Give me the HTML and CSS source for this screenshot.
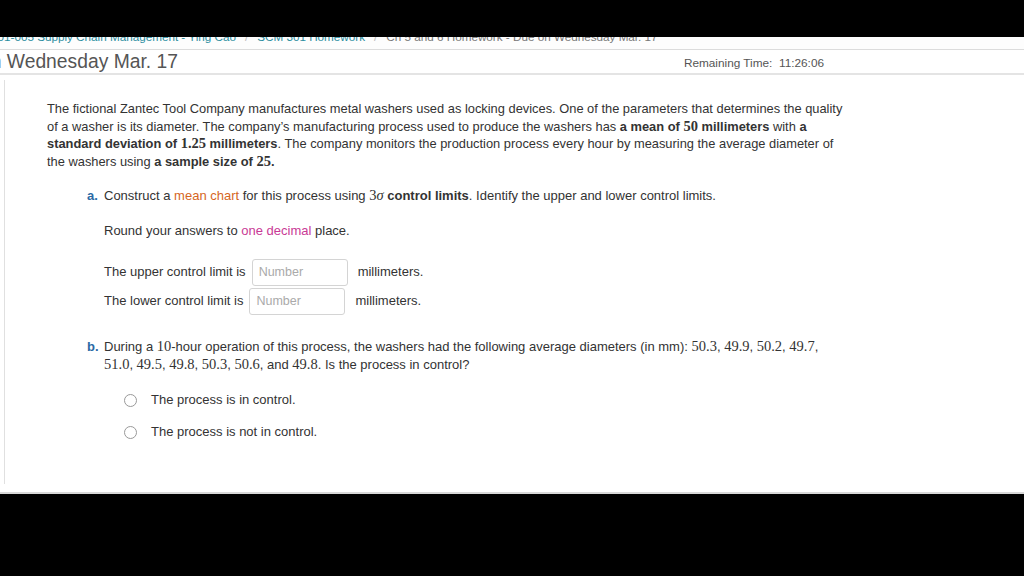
FILE: index.html
```html
<!DOCTYPE html>
<html>
<head>
<meta charset="utf-8">
<link rel="stylesheet" href="styles.css">
</head>
<body>
<div class="screen">
  <div class="viewport">
    <div class="crumbs">
      <div class="crumbs-inner">
        <span class="crumb">301-005 Supply Chain Management - Ying Cao</span>
        <span class="sep">/</span>
        <span class="crumb">SCM 301 Homework</span>
        <span class="sep">/</span>
        <span class="crumb-current">Ch 5 and 6 Homework - Due on Wednesday Mar. 17</span>
      </div>
    </div>
    <div class="header">
      <h1 class="title"><span class="title-cut">on </span>Wednesday Mar. 17</h1>
      <div class="timer">Remaining Time:&nbsp;&nbsp;<span class="timer-val">11:26:06</span></div>
    </div>
    <div class="content">
      <p class="intro">The fictional Zantec Tool Company manufactures metal washers used as locking devices. One of the parameters that determines the quality of a washer is its diameter. The company’s manufacturing process used to produce the washers has <b>a mean of <span class="m">50</span> millimeters</b> with <b>a standard deviation of <span class="m">1.25</span> millimeters</b>. The company monitors the production process every hour by measuring the average diameter of the washers using <b>a sample size of <span class="m">25</span>.</b></p>

      <div class="part part-a">
        <div class="part-row">
          <span class="marker">a.</span>
          <div class="part-body">
            <p class="line">Construct a <span class="orange">mean chart</span> for this process using <span class="m">3<i>σ</i></span> <b>control limits</b>. Identify the upper and lower control limits.</p>
            <p class="line round">Round your answers to <span class="magenta">one decimal</span> place.</p>
            <div class="answer upper">The upper control limit is <span class="box">Number</span> millimeters.</div>
            <div class="answer lower">The lower control limit is <span class="box">Number</span> millimeters.</div>
          </div>
        </div>
      </div>

      <div class="part part-b">
        <div class="part-row">
          <span class="marker">b.</span>
          <div class="part-body">
            <p class="line">During a <span class="m">10</span>-hour operation of this process, the washers had the following average diameters (in mm): <span class="m">50.3</span>, <span class="m">49.9</span>, <span class="m">50.2</span>, <span class="m">49.7</span>, <span class="m">51.0</span>, <span class="m">49.5</span>, <span class="m">49.8</span>, <span class="m">50.3</span>, <span class="m">50.6</span>, and <span class="m">49.8</span>. Is the process in control?</p>
            <div class="options">
              <div class="option"><span class="radio"></span><span>The process is in control.</span></div>
              <div class="option"><span class="radio"></span><span>The process is not in control.</span></div>
            </div>
          </div>
        </div>
      </div>
    </div>
  </div>
</div>
</body>
</html>
```

FILE: styles.css
```css
html, body {
  margin: 0;
  padding: 0;
  background: #000;
}
.screen {
  width: 1024px;
  height: 576px;
  background: #000;
  overflow: hidden;
}
.viewport {
  margin-top: 37px;
  height: 455px;
  background: #fff;
  border-bottom: 2px solid #d8d8d8;
  overflow: hidden;
  font-family: "Liberation Sans", Arial, sans-serif;
  color: #333;
}
.crumbs {
  height: 12px;
  border-bottom: 1px solid #dcdcdc;
  overflow: hidden;
  background: #fdfdfd;
}
.crumbs-inner {
  margin-top: -8px;
  margin-left: -9px;
  font-size: 11.7px;
  line-height: 16px;
  white-space: nowrap;
  display: flex;
  gap: 9px;
}
.crumb { color: #2b8ea0; }
.sep { color: #bbb; }
.crumb-current { color: #777; }
.header {
  height: 23px;
  border-bottom: 2px solid #e4e4e4;
  display: flex;
  align-items: center;
  justify-content: space-between;
  padding-right: 200px;
}
.title {
  margin: 0 0 0 -20px;
  font-weight: normal;
  font-size: 19.3px;
  line-height: 23px;
  color: #555;
  white-space: nowrap;
}
.timer {
  font-size: 11.8px;
  color: #555;
  padding-top: 2px;
}
.content {
  margin: 5px 0 0 4px;
  height: 404px;
  border-left: 1px solid #e0e0e0;
  padding: 20px 0 0 42px;
  box-sizing: border-box;
  font-size: 13px;
  line-height: 17.6px;
}
.intro {
  margin: 0;
  width: 800px;
  font-size: 12.875px;
}
.m {
  font-family: "Liberation Serif", "Times New Roman", serif;
  font-size: 14.5px;
  line-height: 1;
}
.orange { color: #d6661e; }
.magenta { color: #c93a95; }
.part-a { margin-top: 17px; }
.part-row {
  display: flex;
  margin-left: 40px;
}
.marker {
  width: 17px;
  flex: none;
  color: #2c6aa5;
  font-weight: bold;
}
.part-body { width: 725px; }
.line { margin: 0; }
.round { margin-top: 17.4px; }
.answer {
  height: 29px;
  display: flex;
  align-items: center;
}
.upper { margin-top: 17.7px; }
.box {
  display: inline-block;
  box-sizing: border-box;
  width: 96px;
  height: 27px;
  border: 1px solid #d4d4d4;
  border-radius: 3px;
  margin: 0 10px 0 6px;
  padding: 4px 6px;
  color: #aaa;
  font-size: 12.5px;
  line-height: 17px;
}
.lower .box { margin-left: 6px; }
.part-b { margin-top: 22.7px; }
.options { margin-top: 10.6px; margin-left: 20px; }
.option {
  display: flex;
  align-items: center;
  gap: 14px;
  height: 32px;
}
.radio {
  width: 11px;
  height: 11px;
  border: 1px solid #999;
  border-radius: 50%;
  flex: none;
}
```
